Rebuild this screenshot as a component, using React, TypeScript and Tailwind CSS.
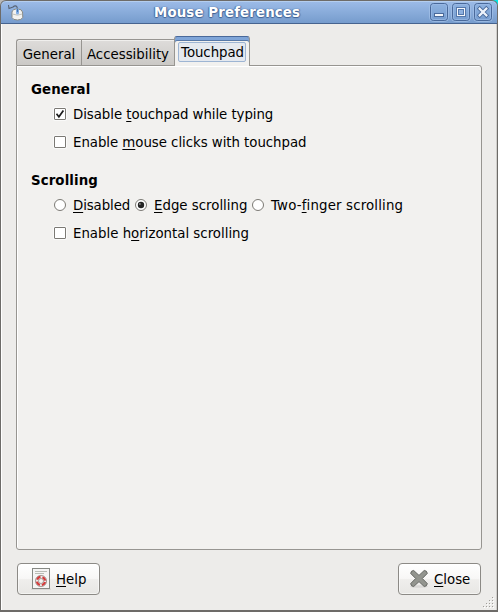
import React from "react";

function Mnemonic({ children }: { children: string }) {
  return (
    <span className="underline decoration-black decoration-[1px] underline-offset-[2px] [text-decoration-skip-ink:none]">
      {children}
    </span>
  );
}

function CheckBox({ checked = false }: { checked?: boolean }) {
  return (
    <span className="flex h-[12px] w-[12px] shrink-0 rounded-[1px] bg-white shadow-[0_0_0_1px_#fafaf9]">
      <svg width="12" height="12" viewBox="0 0 12 12">
        <rect x="0.5" y="0.5" width="11" height="11" rx="0.5" fill="#fff" stroke="#7b7974" />
        {checked && <path d="M2.5 5.8 L4.9 8.8 L9.4 2.4" fill="none" stroke="#1c1c1c" strokeWidth="1.7" />}
      </svg>
    </span>
  );
}

function Radio({ checked = false }: { checked?: boolean }) {
  return (
    <svg className="shrink-0" width="12" height="12" viewBox="0 0 12 12">
      <circle cx="6" cy="6" r="5.5" fill="#fff" stroke="#7b7974" />
      {checked && (
        <>
          <circle cx="6" cy="6" r="3.2" fill="#242424" />
          <circle cx="4.9" cy="4.9" r="1" fill="#858585" />
        </>
      )}
    </svg>
  );
}

function MouseIcon() {
  return (
    <svg width="17" height="18" viewBox="0 0 17 18" fill="none">
      <path d="M1.5 2 L2 5.5 L6 4 Q8.5 1.8 9.9 3.8 L10.5 6" stroke="#586476" strokeWidth="1.1" />
      <path d="M5 9 Q5.5 6 10.5 6 Q15 6 15.5 9 L15.8 14.5 Q14.5 17 10.5 17 Q6 17 5 14.5Z" fill="#f2f2f0" stroke="#888a85" strokeWidth="1" />
      <path d="M5.5 11 Q10.5 13.4 15.3 11" stroke="#c2c4bf" />
      <path d="M10.5 7 V10" stroke="#82aee4" strokeWidth="3" strokeLinecap="round" />
      <path d="M10.5 6 V9" stroke="#4675ad" strokeWidth="1" />
    </svg>
  );
}

function WindowButton({ kind }: { kind: "min" | "max" | "close" }) {
  return (
    <svg width="20" height="20" viewBox="0 0 20 20" fill="none">
      <rect x="0.5" y="0.5" width="19" height="19" rx="4" stroke="#a3c0e7" strokeOpacity=".75" />
      <rect x="1.5" y="1.5" width="17" height="17" rx="3" fill="url(#captionFill)" stroke="#49699a" />
      <rect x="2.5" y="2.5" width="15" height="15" rx="2" stroke="#9bbae5" strokeOpacity=".7" />
      {kind === "min" && <rect x="5.5" y="11.5" width="9" height="3" fill="#f4f7fb" stroke="#49699a" />}
      {kind === "max" && (
        <g shapeRendering="crispEdges">
          <rect x="5" y="5" width="10" height="10" fill="#5578ab" />
          <rect x="6" y="6" width="8" height="8" fill="#f4f7fb" />
          <rect x="7" y="7" width="6" height="6" fill="#5578ab" />
          <rect x="8" y="8" width="4" height="4" fill="#8db0df" />
        </g>
      )}
      {kind === "close" && (
        <>
          <path d="M6.7 6.7 L13.3 13.3 M13.3 6.7 L6.7 13.3" stroke="#49699a" strokeWidth="4" strokeLinecap="square" />
          <path d="M6.7 6.7 L13.3 13.3 M13.3 6.7 L6.7 13.3" stroke="#edf3fb" strokeWidth="2.3" strokeLinecap="square" />
        </>
      )}
      <defs>
        <linearGradient id="captionFill" x1="0" y1="0" x2="0" y2="1">
          <stop stopColor="#8eb2e0" />
          <stop offset="1" stopColor="#759ccf" />
        </linearGradient>
      </defs>
    </svg>
  );
}

function HelpIcon() {
  return (
    <svg width="20" height="22" viewBox="0 0 20 22" fill="none">
      <path d="M0 21.2 H20" stroke="#d2d1cf" />
      <rect x="1.5" y="0.5" width="17" height="20" fill="#f5f5f4" stroke="#878984" />
      <path d="M4 3.5 H16 M4 5.5 H13" stroke="#babdb6" />
      <circle cx="10" cy="13" r="4.1" stroke="#e9e9e7" strokeWidth="3" />
      <circle cx="10" cy="13" r="4.1" stroke="#d83a3a" strokeWidth="2.2" strokeDasharray="4.4 2.04" strokeDashoffset="-1.02" />
      <circle cx="10" cy="13" r="5.6" stroke="#8c7976" strokeWidth=".7" />
      <circle cx="10" cy="13" r="2.5" stroke="#8c7976" strokeWidth=".7" />
    </svg>
  );
}

function CloseIcon() {
  return (
    <svg width="20" height="20" viewBox="0 0 20 20" fill="none">
      <ellipse cx="10" cy="17.5" rx="9" ry="1.3" fill="#d9d8d6" />
      <path
        d="M4.7 1.5 L10 6.4 L15.2 1.5 Q18 1.5 18.3 4.4 L13.3 9.5 L18.3 14.6 Q18 17.5 15.2 17.5 L10 12.6 L4.7 17.5 Q1.9 17.5 1.7 14.6 L6.7 9.5 L1.7 4.4 Q1.9 1.5 4.7 1.5Z"
        fill="#93958f"
        stroke="#666864"
        strokeLinejoin="round"
      />
    </svg>
  );
}

function Grip() {
  const dots: number[][] = [];
  for (let row = 0; row < 4; row++) {
    for (let col = 3 - row; col < 4; col++) dots.push([col * 3, row * 3]);
  }
  return (
    <svg width="12" height="12" viewBox="0 0 12 12" shapeRendering="crispEdges">
      {dots.map(([x, y]) => (
        <g key={`${x}-${y}`}>
          <rect x={x + 1} y={y + 1} width="1" height="1" fill="#fff" />
          <rect x={x} y={y} width="1" height="1" fill="#a09e9a" />
        </g>
      ))}
    </svg>
  );
}

export default function App() {
  return (
    <div className="h-[612px] w-[498px] overflow-hidden bg-[linear-gradient(90deg,#b8b8b8_50%,#00e6e6_50%)] font-['DejaVu_Sans',sans-serif] text-[13.333px] leading-[16px] text-black [font-variant-ligatures:none]">
      <div className="flex h-full flex-col overflow-hidden rounded-t-[6px] border border-b-2 border-[#6d6b68] bg-[#edecea]">
        <header className="-mx-px -mt-px flex h-6 shrink-0 items-start rounded-t-[6px] border border-[#46638f] bg-linear-to-b from-[#9dbce8] to-[#769ccd] pt-px pr-[4px] pl-[6px] shadow-[inset_0_1px_0_#b4ceef]">
          <span className="mt-[1px] w-[17px]"><MouseIcon /></span>
          <h1 className="mt-[3px] ml-[130px] w-[152px] whitespace-nowrap font-bold tracking-[0.14px] text-white [text-shadow:0_1px_1px_#3e5f91,1px_0_1px_#4e70a3,-1px_0_1px_#4e70a3]">
            Mouse Preferences
          </h1>
          <div className="ml-auto flex gap-[2px]">
            <WindowButton kind="min" />
            <WindowButton kind="max" />
            <WindowButton kind="close" />
          </div>
        </header>

        <div className="flex flex-1 flex-col border-r border-l border-r-[#d0cecb] border-l-white px-[14px] pt-[12px]">
          <nav className="relative z-10 flex h-[30px] shrink-0 items-end">
            <div className="mb-px flex h-[26px] w-[65px] items-center justify-center whitespace-nowrap rounded-tl-[3px] border border-r-0 border-b-0 border-[#979591] bg-linear-to-b from-[#dedcda] to-[#cbc9c6] pt-[5px] shadow-[inset_0_1px_0_#f0efed]">
              General
            </div>
            <div className="mb-px flex h-[26px] w-[93px] items-center justify-center whitespace-nowrap border border-r-0 border-b-0 border-[#979591] bg-linear-to-b from-[#dedcda] to-[#cbc9c6] pt-[5px] shadow-[inset_0_1px_0_#f0efed]">
              Accessibility
            </div>
            <div className="flex h-[30px] w-[76px] justify-center rounded-t-[3px] border border-b-0 border-[#979591] border-t-[#49699a] bg-[#f2f1ef] pt-[5px] shadow-[inset_0_3px_0_#7fa5d8,inset_0_4px_0_#5879a8]">
              <div className="flex h-[20px] w-[68px] items-center justify-center whitespace-nowrap rounded-[2px] border border-[#9eb5d3] bg-[#e5e9ef] pt-[2px] pl-px tracking-[-0.06px]">
                Touchpad
              </div>
            </div>
          </nav>

          <main className="-mt-px flex h-[485px] shrink-0 flex-col rounded-b-[3px] rounded-tr-[3px] border border-[#979591] bg-[#f2f1ef] pl-[14px] shadow-[inset_1px_1px_0_#fff]">
            <h2 className="mt-[16px] font-bold tracking-[0.1px]">General</h2>
            <label className="mt-[9px] flex items-start gap-[7px] pl-[23px] whitespace-nowrap">
              <span className="pt-px"><CheckBox checked /></span>
              <span className="tracking-[-0.06px]">Disable <Mnemonic>t</Mnemonic>ouchpad while typing</span>
            </label>
            <label className="mt-[12px] flex items-start gap-[7px] pl-[23px] whitespace-nowrap">
              <span className="pt-px"><CheckBox /></span>
              <span className="tracking-[-0.04px]">Enable <Mnemonic>m</Mnemonic>ouse clicks with touchpad</span>
            </label>
            <h2 className="mt-[22px] font-bold tracking-[0.1px]">Scrolling</h2>
            <div className="mt-[9px] flex items-start pl-[23px] whitespace-nowrap">
              <label className="flex w-[81px] items-start gap-[7px]">
                <span className="pt-px"><Radio /></span>
                <span className="tracking-[-0.1px]"><Mnemonic>D</Mnemonic>isabled</span>
              </label>
              <label className="flex w-[117px] items-start gap-[7px]">
                <span className="pt-px"><Radio checked /></span>
                <span><Mnemonic>E</Mnemonic>dge scrolling</span>
              </label>
              <label className="flex items-start gap-[7px]">
                <span className="pt-px"><Radio /></span>
                <span className="tracking-[0.16px]">Two-<Mnemonic>f</Mnemonic>inger scrolling</span>
              </label>
            </div>
            <label className="mt-[12px] flex items-start gap-[7px] pl-[23px] whitespace-nowrap">
              <span className="pt-px"><CheckBox /></span>
              <span>Enable h<Mnemonic>o</Mnemonic>rizontal scrolling</span>
            </label>
          </main>

          <footer className="relative mt-[13px] flex justify-between px-px">
            <button className="flex h-[32px] w-[83px] items-center gap-[5px] rounded-[4px] border border-[#8c8a86] bg-[linear-gradient(#fff,#f8f7f6_48%,#efeeec_52%,#e8e7e4)] pl-[13px] shadow-[inset_0_0_0_1px_#fff8]">
              <HelpIcon />
              <span className="pt-px"><Mnemonic>H</Mnemonic>elp</span>
            </button>
            <button className="flex h-[32px] w-[83px] items-center gap-[5px] rounded-[4px] border border-[#8c8a86] bg-[linear-gradient(#fff,#f8f7f6_48%,#efeeec_52%,#e8e7e4)] pl-[10px] shadow-[inset_0_0_0_1px_#fff8]">
              <CloseIcon />
              <span className="pt-px"><Mnemonic>C</Mnemonic>lose</span>
            </button>
            <span className="absolute top-[34px] -right-[13px]"><Grip /></span>
          </footer>
        </div>
      </div>
    </div>
  );
}
